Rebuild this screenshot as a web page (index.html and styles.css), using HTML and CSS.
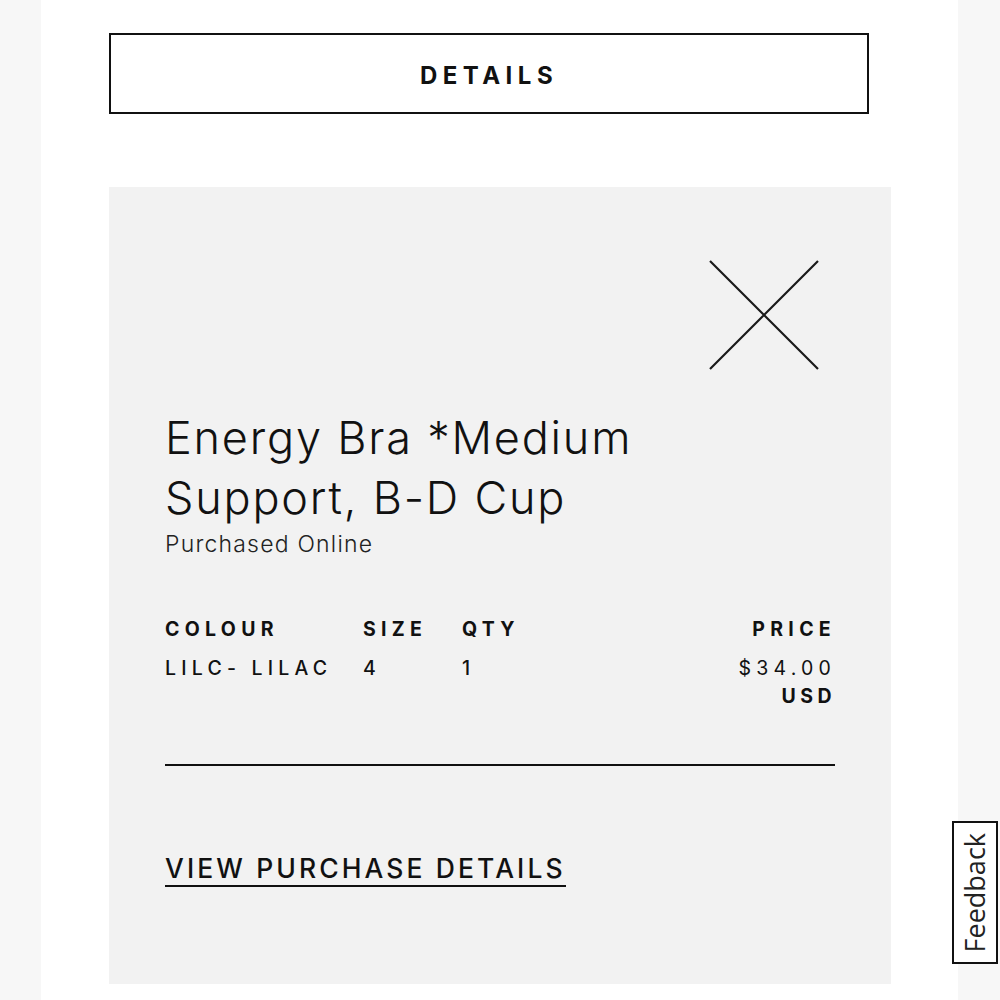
FILE: index.html
```html
<!DOCTYPE html>
<html lang="en">
<head>
<meta charset="utf-8">
<title>Order details</title>
<link rel="stylesheet" href="styles.css">
</head>
<body>
<main class="column">
  <button class="details-btn" type="button">DETAILS</button>
  <section class="card">
    <div class="card-top">
      <button class="close" type="button" aria-label="Close">
        <svg width="110" height="110" viewBox="0 0 110 110" aria-hidden="true">
          <path d="M1 1 L109 109 M109 1 L1 109" stroke="#1a1a1a" stroke-width="2.2" fill="none"/>
        </svg>
      </button>
    </div>
    <h1 class="title">Energy Bra *Medium<br>Support, B-D Cup</h1>
    <p class="sub">Purchased Online</p>
    <div class="table">
      <div class="th">COLOUR</div>
      <div class="th">SIZE</div>
      <div class="th">QTY</div>
      <div class="th right">PRICE</div>
      <div class="td">LILC- LILAC</div>
      <div class="td">4</div>
      <div class="td">1</div>
      <div class="td right price">$34.00<br><span class="cur">USD</span></div>
    </div>
    <hr class="rule">
    <a class="view-link" href="#">VIEW PURCHASE DETAILS</a>
  </section>
</main>
<div class="feedback"><span>Feedback</span></div>
</body>
</html>
```

FILE: styles.css
```css
html, body {
  margin: 0;
  padding: 0;
}
body {
  background: #f7f7f7;
  font-family: Inter, Roboto, "Liberation Sans", sans-serif;
  color: #111;
  height: 1000px;
  overflow: hidden;
}
.column {
  width: 917px;
  margin-left: 41px;
  background: #fff;
  min-height: 1000px;
  box-sizing: border-box;
  padding: 33px 0 0 68px;
}
.details-btn {
  display: block;
  width: 760px;
  height: 81px;
  background: #fff;
  border: 2px solid #111;
  font-family: Inter, Roboto, "Liberation Sans", sans-serif;
  font-weight: 700;
  font-size: 24px;
  letter-spacing: 5.5px;
  color: #111;
  padding: 3px 0 0 0;
  margin: 0;
}
.card {
  margin-top: 73px;
  width: 782px;
  height: 797px;
  box-sizing: border-box;
  background: #f2f2f2;
  padding: 73px 56px 0 56px;
}
.card-top {
  display: flex;
  justify-content: flex-end;
  padding-right: 16px;
}
.close {
  background: none;
  border: 0;
  padding: 0;
  margin: 0;
  display: block;
  width: 110px;
  height: 110px;
}
.close svg { display: block; }
.title {
  margin: 38px 0 0 0;
  font-weight: 300;
  font-size: 45px;
  line-height: 60px;
  letter-spacing: 1.8px;
  color: #111;
}
.sub {
  margin: 1px 0 0 0;
  font-weight: 300;
  font-size: 23px;
  line-height: 30px;
  letter-spacing: 1.2px;
  color: #222;
}
.table {
  margin-top: 56px;
  display: grid;
  grid-template-columns: 198px 99px 1fr auto;
  row-gap: 11px;
}
.th {
  font-weight: 700;
  font-size: 19.5px;
  line-height: 28px;
  letter-spacing: 5.3px;
}
.td {
  font-weight: 500;
  font-size: 19.5px;
  line-height: 28px;
  letter-spacing: 5.2px;
}
.right {
  text-align: right;
  margin-right: -1px;
}
.price { font-weight: 400; }
.cur { font-weight: 700; letter-spacing: 4.5px; }
.rule {
  margin: 54px 0 0 0;
  border: 0;
  height: 2px;
  background: #111;
}
.view-link {
  display: inline-block;
  margin-top: 89px;
  font-weight: 500;
  font-size: 26.5px;
  line-height: 26px;
  letter-spacing: 3.1px;
  color: #111;
  text-decoration: none;
  border-bottom: 2px solid #111;
  padding-bottom: 4px;
}
.feedback {
  position: fixed;
  left: 952px;
  top: 821px;
  width: 46px;
  height: 143px;
  box-sizing: border-box;
  background: #fff;
  border: 2px solid #111;
  display: flex;
  align-items: center;
  justify-content: center;
}
.feedback span {
  writing-mode: vertical-rl;
  transform: rotate(180deg);
  font-family: "Open Sans", "DejaVu Sans", sans-serif;
  font-size: 27px;
  line-height: 30px;
  color: #222;
}
```
